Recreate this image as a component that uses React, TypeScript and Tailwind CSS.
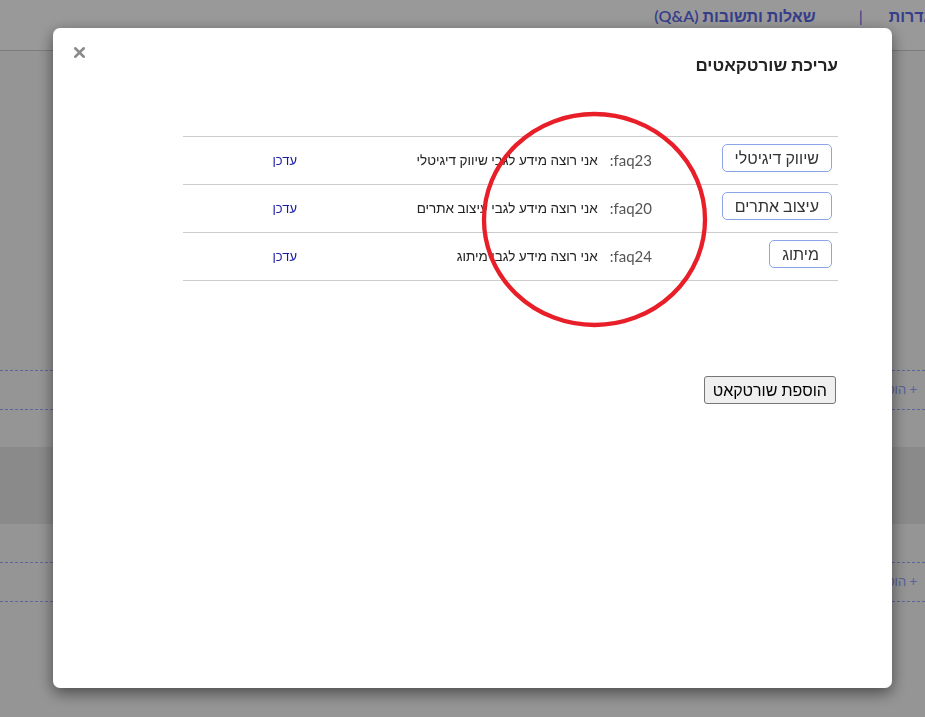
import { X } from "lucide-react";

const shortcuts = [
  { label: "שיווק דיגיטלי", code: "faq23", text: "אני רוצה מידע לגבי שיווק דיגיטלי" },
  { label: "עיצוב אתרים", code: "faq20", text: "אני רוצה מידע לגבי עיצוב אתרים" },
  { label: "מיתוג", code: "faq24", text: "אני רוצה מידע לגבי מיתוג" },
];

const App = () => {
  return (
    <div
      dir="rtl"
      className="relative h-screen w-full overflow-hidden bg-[#f8f8f8] font-['Lato','Liberation_Sans',sans-serif]"
    >
      {/* page behind the modal */}
      <header className="flex h-[51px] items-start border-b border-[#cfcfcf] bg-white">
        <nav className="-mr-[17px] mt-[4px] flex items-center text-[16px] font-bold text-[#5a66e8]">
          <span>הגדרות</span>
          <span className="ml-[43px] mr-[26px] font-normal">|</span>
          <span>
            שאלות ותשובות <span className="font-semibold">(Q&amp;A)</span>
          </span>
        </nav>
      </header>

      <main className="flex flex-col pt-[319px]">
        <div className="flex h-[40px] items-center border-y border-dashed border-[#96aaff] pr-[8px] text-[13px] text-[#90a4ff]">
          + הוספת שאלה
        </div>
        <div className="mt-[37px] h-[77px] bg-[#e6e6e6]" />
        <div className="mt-[38px] flex h-[40px] items-center border-y border-dashed border-[#96aaff] pr-[8px] text-[13px] text-[#90a4ff]">
          + הוספת שאלה
        </div>
      </main>

      {/* backdrop */}
      <div className="fixed inset-0 bg-black/40" />

      {/* modal */}
      <div className="fixed left-[53px] top-[28px] flex h-[660px] w-[839px] flex-col rounded-[7px] bg-white shadow-[0_5px_15px_rgba(0,0,0,0.5)]">
        <div className="flex items-start justify-between pl-[18px] pr-[54px]">
          <h2 className="mt-[27px] text-[17px] font-bold leading-[20px] text-[#222]">
            עריכת שורטקאטים
          </h2>
          <button className="mt-[16px] text-[#8a8a8a]">
            <X size={17} strokeWidth={3.5} />
          </button>
        </div>

        <div className="ml-[130px] mr-[54px] mt-[61px] flex flex-col border-b border-[#cccccc]">
          {shortcuts.map((s) => (
            <div key={s.code} className="flex h-[48px] items-center border-t border-[#cccccc]">
              <div className="flex w-[180px] self-start pr-[6px] pt-[7px]">
                <button className="h-[28px] rounded-[5px] border border-[#8ba5e8] bg-white px-[12px] text-[16px] text-[#333]">
                  {s.label}
                </button>
              </div>
              <div className="flex flex-1 items-center pr-[6px]">
                <span className="text-[15px] text-[#555]">{s.code}:</span>
                <span className="mr-[12px] text-[13.5px] text-[#222]">{s.text}</span>
              </div>
              <div className="w-[127px] pr-[13px] text-[13px] text-[#1a1aa6]">
                <a href="#">עדכן</a>
              </div>
            </div>
          ))}
        </div>

        <div className="mr-[56px] mt-[95px] flex">
          <button className="h-[28px] rounded-[3px] border border-[#767676] bg-[#efefef] px-[8px] text-[16px] text-black">
            הוספת שורטקאט
          </button>
        </div>
      </div>

      {/* annotation */}
      <svg className="pointer-events-none fixed inset-0" width="925" height="717">
        <ellipse cx="594.5" cy="219.5" rx="110.5" ry="105.5" fill="none" stroke="#e81e28" strokeWidth="4.3" />
      </svg>
    </div>
  );
};

export default App;
